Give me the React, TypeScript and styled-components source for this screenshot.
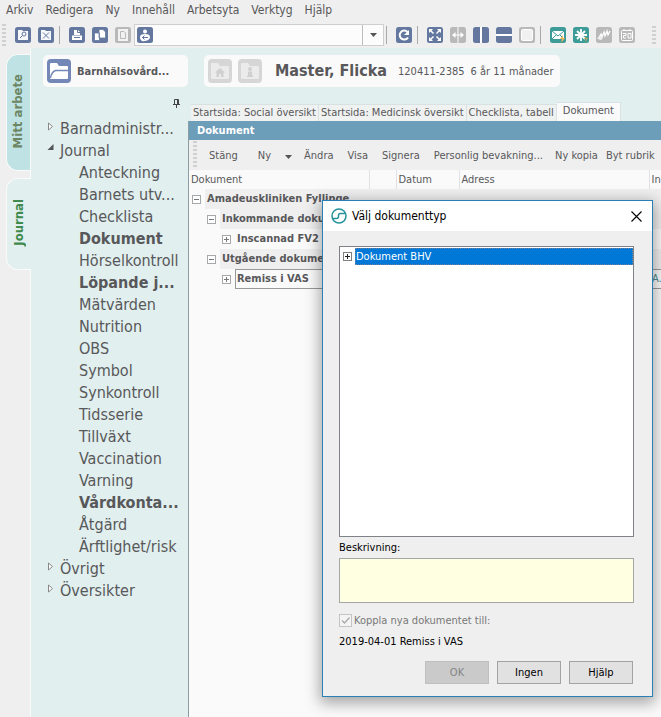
import React from "react";
import styled, { createGlobalStyle } from "styled-components";

const Global = createGlobalStyle`
  * { box-sizing: border-box; }
  html, body { margin: 0; height: 100%; overflow: hidden; }
  #root { height: 100%; }
  body, button, input, textarea, table {
    font-family: "DejaVu Sans Condensed", "Noto Sans", sans-serif;
    font-size: 11px;
  }
  button { cursor: default; }
`;

const Shell = styled.div`
  height: 100%;
  display: flex;
  flex-direction: column;
  background: #efefef;
  color: #58585a;
`;

const MenuBar = styled.nav`
  display: flex;
  align-items: flex-start;
  gap: 12px;
  height: 22px;
  flex: none;
  padding: 0 6px;
`;

const MenuItem = styled.button`
  border: 0;
  padding: 0;
  background: none;
  color: inherit;
  font-size: 12px;
  line-height: 20px;
`;

const Toolbar = styled.div`
  display: flex;
  align-items: center;
  flex: none;
  height: 26px;
  padding-left: 2px;
  overflow: hidden;
`;

const Grip = styled.span<{ $h: number; $ml?: number }>`
  width: 4px;
  height: ${(p) => p.$h}px;
  margin-left: ${(p) => p.$ml ?? 0}px;
  flex: none;
  background: repeating-linear-gradient(#d0d0d0 0 2px, transparent 2px 4px);
`;

const ToolButton = styled.button<{ $gap?: number }>`
  border: 0;
  padding: 0;
  background: none;
  width: 16px;
  height: 16px;
  flex: none;
  margin-left: ${(p) => p.$gap ?? 7}px;
  svg { display: block; }
`;

const Separator = styled.span<{ $ml?: number }>`
  width: 1px;
  height: 18px;
  margin-left: ${(p) => p.$ml ?? 5}px;
  flex: none;
  background: #a9a9a9;
`;

const Combo = styled.div`
  display: flex;
  align-items: center;
  width: 250px;
  height: 22px;
  margin-left: 3px;
  flex: none;
  background: #fcfcfc;
  border: 1px solid #cfcfcf;
  svg { flex: none; margin-left: 2px; }
`;

const ComboInput = styled.input`
  flex: 1;
  min-width: 0;
  border: 0;
  background: none;
  outline: none;
`;

const ComboArrow = styled.button`
  display: grid;
  place-items: center;
  width: 21px;
  height: 100%;
  padding: 0;
  border: 0;
  border-left: 1px solid #bdbdbd;
  background: none;
  svg { margin: 0; }
`;

const Body = styled.div`
  flex: 1;
  min-height: 0;
  display: flex;
`;

const SideTabs = styled.div`
  width: 31px;
  flex: none;
  padding-left: 6px;
  display: flex;
  flex-direction: column;
  gap: 7px;
  padding-top: 6px;
  border-right: 1px solid #fafafa;
`;

const SideTab = styled.button<{ $active?: boolean }>`
  width: ${(p) => (p.$active ? 25 : 24)}px;
  height: ${(p) => (p.$active ? 92 : 117)}px;
  padding: 0 2px 0 0;
  border: 1px solid #fafafa;
  border-right: 0;
  border-radius: 12px 0 0 12px;
  background: ${(p) => (p.$active ? "#e1efef" : "#bfe2e4")};
  color: ${(p) => (p.$active ? "#3f8a4c" : "#6c8562")};
  font-size: 13px;
  font-weight: bold;
  span {
    writing-mode: vertical-rl;
    transform: rotate(180deg);
  }
`;

const Workspace = styled.div`
  flex: 1;
  min-width: 0;
  display: flex;
  flex-direction: column;
  background: #e1efef;
`;

const Header = styled.div`
  display: flex;
  gap: 16px;
  flex: none;
  padding: 7px 12px 0;
`;

const Card = styled.div<{ $w: number }>`
  display: flex;
  align-items: center;
  width: ${(p) => p.$w}px;
  height: 32px;
  padding-left: 4px;
  border-radius: 5px;
  background: #fafafa;
  white-space: nowrap;
  svg { flex: none; margin-right: 6px; }
`;

const UnitName = styled.strong``;

const PatientName = styled.h1`
  margin: 0 11px 0 7px;
  font-size: 16px;
  line-height: 24px;
`;

const PatientInfo = styled.span`
  margin-right: 6px;
`;

const Columns = styled.div`
  flex: 1;
  min-height: 0;
  display: flex;
`;

const Nav = styled.aside`
  width: 157px;
  flex: none;
  padding-top: 12px;
`;

const PinRow = styled.div`
  display: flex;
  justify-content: flex-end;
  height: 19px;
  padding-right: 7px;
`;

const NavItem = styled.a<{ $level: number; $bold?: boolean }>`
  display: flex;
  height: 22px;
  padding-left: ${(p) => (p.$level ? 48 : 16)}px;
  padding-right: 6px;
  font-size: 16px;
  line-height: 22px;
  font-weight: ${(p) => (p.$bold ? "bold" : "normal")};
  color: inherit;
  text-decoration: none;
  white-space: nowrap;
  svg { flex: none; width: 8px; margin: 4px 5px 0 0; }
`;

const Main = styled.main`
  flex: 1;
  min-width: 0;
  display: flex;
  flex-direction: column;
  padding-top: 14px;
`;

const Tabs = styled.div`
  display: flex;
  align-items: flex-end;
  height: 20px;
  flex: none;
  padding-left: 3px;
`;

const Tab = styled.button<{ $active?: boolean }>`
  height: ${(p) => (p.$active ? 19 : 17)}px;
  padding: ${(p) => (p.$active ? "0 6px 3px" : "0 2px")};
  border: 1px solid #d9e2e2;
  border-width: 1px 1px 0 0;
  background: ${(p) => (p.$active ? "#fafafa" : "#f0f1f1")};
  color: inherit;
  line-height: 14px;
  white-space: nowrap;
`;

const Panel = styled.section`
  flex: 1;
  min-height: 0;
  border-left: 1px solid #8c9ca3;
  background: #fafafa;
  overflow: hidden;
`;

const PanelTitle = styled.h2`
  margin: 0;
  padding-left: 8px;
  height: 19px;
  line-height: 19px;
  font-size: 11px;
  color: #fff;
  background: #6c9db9;
`;

const Actions = styled.div`
  display: flex;
  align-items: center;
  height: 30px;
  padding-left: 4px;
  background: #efefef;
`;

const Action = styled.button<{ $ml: number }>`
  flex: none;
  margin-left: ${(p) => p.$ml}px;
  padding: 1px 0 0;
  border: 0;
  background: none;
  color: inherit;
  white-space: nowrap;
`;

const Table = styled.table`
  width: 100%;
  table-layout: fixed;
  border-collapse: collapse;
  th {
    height: 19px;
    padding: 0 2px;
    font-weight: normal;
    text-align: left;
    border-right: 1px solid #e2e2e6;
  }
  th:last-child { border-right: 0; }
  td {
    height: 20px;
    padding: 0;
    white-space: nowrap;
  }
`;

const Cell = styled.div<{ $indent: number; $shade?: boolean; $boxed?: boolean }>`
  display: flex;
  align-items: center;
  height: 20px;
  padding-left: ${(p) => 3 + p.$indent * 15}px;
  font-weight: bold;
  svg { flex: none; }
  span {
    flex: 1;
    height: 20px;
    margin-left: 4px;
    padding-left: 1px;
    line-height: 18px;
    background: ${(p) => (p.$shade ? "#efefef" : "none")};
    border: 1px solid ${(p) => (p.$boxed ? "#999" : "transparent")};
    border-right: 0;
  }
`;

const EndCell = styled.div<{ $shade?: boolean; $boxed?: boolean }>`
  height: 20px;
  line-height: 18px;
  padding-left: 3px;
  background: ${(p) => (p.$shade ? "#efefef" : "none")};
  border: 1px solid ${(p) => (p.$boxed ? "#999" : "transparent")};
  border-width: 1px 0;
  color: #4d8b91;
`;

const Dialog = styled.div`
  position: absolute;
  left: 322px;
  top: 200px;
  width: 331px;
  display: flex;
  flex-direction: column;
  background: #efefef;
  border: 1px solid #2a7fb5;
  box-shadow: 0 4px 14px 2px rgba(0, 0, 0, 0.35);
  color: #000;
`;

const DialogTitle = styled.header`
  display: flex;
  align-items: center;
  height: 30px;
  flex: none;
  padding: 0 10px 0 8px;
  background: #fff;
  h2 {
    flex: 1;
    margin: 0 0 0 5px;
    font-size: 12px;
    font-weight: normal;
  }
`;

const CloseButton = styled.button`
  padding: 0;
  border: 0;
  background: none;
  svg { display: block; }
`;

const DialogBody = styled.div`
  display: flex;
  flex-direction: column;
  padding: 15px 18px 12px 16px;
`;

const TypeTree = styled.div`
  height: 291px;
  padding: 1px 0 0 3px;
  background: #fff;
  border: 1px solid #7f8388;
`;

const TypeRow = styled.div`
  display: flex;
  align-items: center;
  height: 17px;
  gap: 3px;
  span {
    flex: 1;
    height: 17px;
    line-height: 17px;
    padding-left: 1px;
    color: #fff;
    background: #0078d7;
    outline: 1px dotted #6f8299;
    outline-offset: -1px;
  }
`;

const Label = styled.label`
  height: 21px;
  line-height: 22px;
`;

const Description = styled.textarea`
  height: 45px;
  resize: none;
  border: 1px solid #a6a6a6;
  background: #ffffe1;
`;

const CheckLabel = styled.label`
  display: flex;
  align-items: center;
  gap: 2px;
  height: 15px;
  margin-top: 10px;
  color: #787878;
`;

const Check = styled.input`
  appearance: none;
  width: 13px;
  height: 13px;
  margin: 0;
  border: 1px solid #c4c4c4;
  background: #f4f4f4 url("data:image/svg+xml,%3Csvg xmlns='http://www.w3.org/2000/svg' viewBox='0 0 11 11'%3E%3Cpath d='M2 5.5l2.5 2.5 5-5.5' fill='none' stroke='%23aaa' stroke-width='1.3'/%3E%3C/svg%3E");
`;

const Linked = styled.p`
  margin: 6px 0 0;
  line-height: 16px;
`;

const Buttons = styled.div`
  display: flex;
  justify-content: flex-end;
  gap: 8px;
  margin-top: 11px;
  padding-right: 1px;
`;

const PushButton = styled.button`
  width: 64px;
  height: 23px;
  padding: 0;
  border: 1px solid #a3a3a3;
  background: #e1e1e1;
  color: #000;
  &:disabled {
    border-color: #bfbfbf;
    background: #cacaca;
    color: #858585;
  }
`;

const blue = "#64789f";
const grey = "#b9b9b9";
const teal = "#3d9c98";

function Glyph({ fill = blue, children }: { fill?: string; children?: React.ReactNode }) {
  return (
    <svg width="16" height="16" viewBox="0 0 16 16" fill="none" stroke="#fff">
      <rect width="16" height="16" rx="2.5" fill={fill} stroke="none" />
      {children}
    </svg>
  );
}

const Sheet = <path d="M3 3h4l1 1h5v9h-10z" fill="#f6f8fb" stroke="none" />;

function Expander({ open, dark }: { open?: boolean; dark?: boolean }) {
  const ink = dark ? "#222" : "#777";
  return (
    <svg width="9" height="9" viewBox="0 0 9 9" fill="#fff">
      <rect x=".5" y=".5" width="8" height="8" stroke={dark ? "#808080" : "#a5a9ac"} />
      <path d={open ? "M2 4.5h5" : "M2 4.5h5M4.5 2v5"} stroke={ink} />
    </svg>
  );
}

function Down() {
  return (
    <svg width="7" height="4" viewBox="0 0 7 4"><path d="M0 0h7L3.5 4z" fill="#555" /></svg>
  );
}

function Folder({ fill, mark }: { fill: string; mark?: "home" | "info" }) {
  const light = mark ? "#ebebeb" : "#fff";
  return (
    <svg width="24" height="24" viewBox="0 0 24 24">
      <rect width="24" height="24" rx="4" fill={fill} />
      <path d="M3 5q0-1 1-1h6l2 3h8q1 0 1 1v11q0 1-1 1H4q-1 0-1-1z" fill={light} />
      {!mark && <path d="M3.500 19q1-6 5-7.500h12.500" fill="none" stroke={fill} strokeWidth="1.400" />}
      {mark === "home" && <path d="M7 13.500L12 9l5 4.500h-1.500V18h-2.500v-3h-2v3H8.500v-4.500z" fill="#d0d0d0" />}
      {mark === "info" && <path d="M12 8a2 2 0 110 4 2 2 0 010-4M10 12.500h4v4h1v1.500H9v-1.500h1z" fill="#d0d0d0" />}
    </svg>
  );
}

const navItems: { text: string; level: number; bold?: boolean; open?: boolean }[] = [
  { text: "Barnadministr...", level: 0 },
  { text: "Journal", level: 0, open: true },
  { text: "Anteckning", level: 1 },
  { text: "Barnets utv...", level: 1 },
  { text: "Checklista", level: 1 },
  { text: "Dokument", level: 1, bold: true },
  { text: "Hörselkontroll", level: 1 },
  { text: "Löpande j...", level: 1, bold: true },
  { text: "Mätvärden", level: 1 },
  { text: "Nutrition", level: 1 },
  { text: "OBS", level: 1 },
  { text: "Symbol", level: 1 },
  { text: "Synkontroll", level: 1 },
  { text: "Tidsserie", level: 1 },
  { text: "Tillväxt", level: 1 },
  { text: "Vaccination", level: 1 },
  { text: "Varning", level: 1 },
  { text: "Vårdkonta...", level: 1, bold: true },
  { text: "Åtgärd", level: 1 },
  { text: "Ärftlighet/risk", level: 1 },
  { text: "Övrigt", level: 0 },
  { text: "Översikter", level: 0 },
];

const rows: { text: string; indent: number; open?: boolean; shade?: boolean; boxed?: boolean; end?: string }[] = [
  { text: "Amadeuskliniken Fyllinge", indent: 0, open: true, shade: true },
  { text: "Inkommande dokument", indent: 1, open: true, shade: true },
  { text: "Inscannad FV2", indent: 2 },
  { text: "Utgående dokument", indent: 1, open: true, shade: true },
  { text: "Remiss i VAS", indent: 2, boxed: true, end: "A." },
];

export default function App() {
  return (
    <Shell>
      <Global />
      <MenuBar>
        {["Arkiv", "Redigera", "Ny", "Innehåll", "Arbetsyta", "Verktyg", "Hjälp"].map((m) => (
          <MenuItem key={m}>{m}</MenuItem>
        ))}
      </MenuBar>
      <Toolbar>
        <Grip $h={22} />
        <ToolButton $gap={9} aria-label="Sök"><Glyph>{Sheet}<circle cx="9" cy="7" r="2" stroke={blue} /><path d="M7.500 8.500L5 11" stroke={blue} /></Glyph></ToolButton>
        <ToolButton aria-label="Stäng"><Glyph>{Sheet}<path d="M5 5.500l6 6M11 5.500l-6 6" stroke={blue} /></Glyph></ToolButton>
        <Separator />
        <ToolButton $gap={9} aria-label="Skriv ut"><Glyph><path d="M5 8V3h4l2 2v3M3 8.500h10V13H3z" fill="#fff" stroke="none" /><path d="M5 10.500h6M8.500 3v2.500H11" stroke={blue} /></Glyph></ToolButton>
        <ToolButton aria-label="Kopiera"><Glyph><path d="M2.500 6h5v7.500h-5zM7 2.500h4l2.500 2.500v6H7z" fill="#fff" stroke={blue} strokeWidth=".8" /></Glyph></ToolButton>
        <ToolButton aria-label="Klistra in"><Glyph fill={grey}><rect x="3" y="2" width="10" height="12" fill="#f2f2f2" stroke="none" /><path d="M5.500 4.500h3.500l1.500 1.500v5.500h-5z" stroke={grey} /></Glyph></ToolButton>
        <Combo>
          <Glyph><circle cx="8" cy="4.500" r="2" fill="#fff" stroke="none" /><path d="M3 10q0-3 5-3t5 3-5 4-5-4z" fill="#fff" stroke="none" /><path d="M5 10.500h6M7.500 8.500l-2 2 2 2" stroke={blue} /></Glyph>
          <ComboInput aria-label="Patient" />
          <ComboArrow aria-label="Visa lista"><Down /></ComboArrow>
        </Combo>
        <Separator $ml={2} />
        <ToolButton $gap={9} aria-label="Uppdatera"><Glyph><path d="M12 10.500A4.500 4.500 0 1111.500 5" strokeWidth="2" /><path d="M13 3v5H8z" fill="#fff" stroke="none" /></Glyph></ToolButton>
        <Separator />
        <ToolButton $gap={9} aria-label="Helskärm"><Glyph><path d="M3 3l3.500 3.500M13 3L9.500 6.500M3 13l3.500-3.500M13 13L9.500 9.500" strokeWidth="1.500" /><path d="M2 2h4L2 6zM14 2v4L10 2zM2 14v-4l4 4zM14 14h-4l4-4z" fill="#fff" stroke="none" /></Glyph></ToolButton>
        <ToolButton aria-label="Bredd"><Glyph fill={grey}><path d="M8 0v16M3 8h10" /><path d="M2 8l3.500-3v6zM14 8l-3.500-3v6z" fill="#fff" stroke="none" /></Glyph></ToolButton>
        <ToolButton aria-label="Delad lodrätt"><Glyph><path d="M8 0v16" strokeWidth="2" /></Glyph></ToolButton>
        <ToolButton aria-label="Delad vågrätt"><Glyph><path d="M0 8h16" strokeWidth="2" /></Glyph></ToolButton>
        <ToolButton aria-label="Ett fönster"><Glyph fill={grey}><rect x="2.500" y="2.500" width="11" height="11" rx="1" fill="#f1f1f1" /></Glyph></ToolButton>
        <Separator />
        <ToolButton $gap={9} aria-label="Meddelande"><Glyph fill={teal}><path d="M2 4h12v8H2z" fill="#fff" stroke="none" /><path d="M2 4l6 5 6-5M2 12l4-4M14 12l-4-4" stroke={teal} /><path d="M13 8l-3 4h2l-1 4 4-5h-2z" fill="#eeb45a" stroke="none" /></Glyph></ToolButton>
        <ToolButton aria-label="Ny händelse"><Glyph fill={teal}><path d="M8 2v12M2 8h12M4 4l8 8M12 4l-8 8" strokeWidth="1.800" /><path d="M13 9l-2 3h2l-1 4 3-5h-2z" fill="#b5a860" stroke="none" /></Glyph></ToolButton>
        <ToolButton aria-label="Diagram"><Glyph fill={grey}><path d="M2 12l3-5 1 3 2-5 1 4 2-5 1 4 2-4" strokeWidth="1.300" /><circle cx="4.500" cy="11" r="2" fill="#eee" stroke="none" /></Glyph></ToolButton>
        <ToolButton aria-label="Kalender"><Glyph fill={grey}><rect x="2.500" y="3.500" width="11" height="10" rx="1" /><path d="M4 6.500h3v2H4.500v2.500H7M9 6.500h3v4.500H9zM5 2v2M11 2v2" /></Glyph></ToolButton>
        <Grip $h={18} $ml={17} />
      </Toolbar>
      <Body>
        <SideTabs>
          <SideTab><span>Mitt arbete</span></SideTab>
          <SideTab $active><span>Journal</span></SideTab>
        </SideTabs>
        <Workspace>
          <Header>
            <Card $w={145}><Folder fill="#7488b8" /><UnitName>Barnhälsovård...</UnitName></Card>
            <Card $w={356}>
              <Folder fill="#d6d6d6" mark="home" />
              <Folder fill="#d6d6d6" mark="info" />
              <PatientName>Master, Flicka</PatientName>
              <PatientInfo>120411-2385</PatientInfo>
              <PatientInfo>6 år 11 månader</PatientInfo>
            </Card>
          </Header>
          <Columns>
            <Nav>
              <PinRow>
                <svg width="9" height="9" viewBox="0 0 9 9" fill="none" stroke="#444"><path d="M2.500 5V.5h4V5M5.500 1v4M1 5.500h7M4.500 6v3" /></svg>
              </PinRow>
              {navItems.map((n) => (
                <NavItem key={n.text} href="#" $level={n.level} $bold={n.bold}>
                  {n.level === 0 && (
                    <svg width="8" height="9" viewBox="0 0 8 9">
                      {n.open ? <path d="M6.500 0v6H.5z" fill="#555" /> : <path d="M1.500 1l4 3.500-4 3.500z" fill="#fff" stroke="#888" />}
                    </svg>
                  )}
                  {n.text}
                </NavItem>
              ))}
            </Nav>
            <Main>
              <Tabs>
                <Tab>Startsida: Social översikt</Tab>
                <Tab>Startsida: Medicinsk översikt</Tab>
                <Tab>Checklista, tabell</Tab>
                <Tab $active>Dokument</Tab>
              </Tabs>
              <Panel>
                <PanelTitle>Dokument</PanelTitle>
                <Actions>
                  <Grip $h={28} />
                  <Action $ml={12}>Stäng</Action>
                  <Action $ml={20}>Ny</Action>
                  <Action $ml={14} aria-label="Fler val"><Down /></Action>
                  <Action $ml={12}>Ändra</Action>
                  <Action $ml={14}>Visa</Action>
                  <Action $ml={14}>Signera</Action>
                  <Action $ml={14}>Personlig bevakning...</Action>
                  <Action $ml={12}>Ny kopia</Action>
                  <Action $ml={8}>Byt rubrik</Action>
                </Actions>
                <Table>
                  <colgroup><col width="180" /><col width="27" /><col width="63" /><col width="190" /><col /></colgroup>
                  <thead><tr><th>Dokument</th><th /><th>Datum</th><th>Adress</th><th>In</th></tr></thead>
                  <tbody>
                    {rows.map((r) => (
                      <tr key={r.text}>
                        <td colSpan={4}><Cell $indent={r.indent} $shade={r.shade} $boxed={r.boxed}><Expander open={r.open} /><span>{r.text}</span></Cell></td>
                        <td><EndCell $shade={r.shade} $boxed={r.boxed}>{r.end}</EndCell></td>
                      </tr>
                    ))}
                  </tbody>
                </Table>
              </Panel>
            </Main>
          </Columns>
        </Workspace>
      </Body>
      <Dialog role="dialog" aria-label="Välj dokumenttyp">
        <DialogTitle>
          <svg width="16" height="16" viewBox="0 0 16 16" fill="none" stroke="#24939b" strokeWidth="1.500"><circle cx="8" cy="8" r="7" /><path d="M1.500 10.500h4q2 0 2-2v-1q0-2 2-2h5" /></svg>
          <h2>Välj dokumenttyp</h2>
          <CloseButton aria-label="Stäng"><svg width="11" height="11" viewBox="0 0 11 11" stroke="#000" strokeWidth="1.100"><path d="M.5.5l10 10M10.500.5l-10 10" /></svg></CloseButton>
        </DialogTitle>
        <DialogBody>
          <TypeTree><TypeRow><Expander dark /><span>Dokument BHV</span></TypeRow></TypeTree>
          <Label htmlFor="description">Beskrivning:</Label>
          <Description id="description" />
          <CheckLabel><Check type="checkbox" defaultChecked disabled />Koppla nya dokumentet till:</CheckLabel>
          <Linked>2019-04-01 Remiss i VAS</Linked>
          <Buttons>
            <PushButton disabled>OK</PushButton>
            <PushButton>Ingen</PushButton>
            <PushButton>Hjälp</PushButton>
          </Buttons>
        </DialogBody>
      </Dialog>
    </Shell>
  );
}
